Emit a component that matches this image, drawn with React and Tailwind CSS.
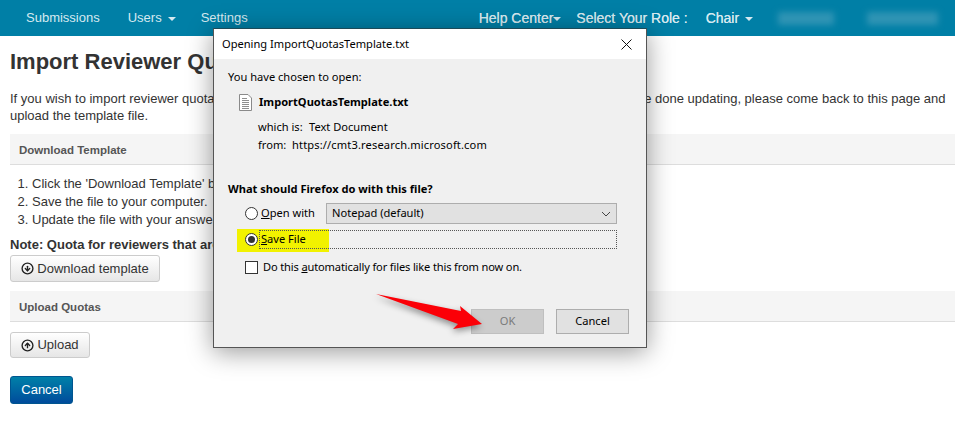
import { CircleArrowDown, CircleArrowUp } from "lucide-react";

const Caret = () => (
  <span className="inline-block ml-1.5 align-middle border-x-[4px] border-t-[4px] border-x-transparent border-t-[#d5e9f0]" />
);

const Radio = ({ checked }) => (
  <span className="w-[13px] h-[13px] rounded-full border border-[#333] bg-white flex items-center justify-center shrink-0">
    {checked && <span className="w-[7px] h-[7px] rounded-full bg-[#333]" />}
  </span>
);

const FileIcon = () => (
  <svg width="13" height="17" viewBox="0 0 13 17" className="shrink-0">
    <path d="M0.5 0.5H9L12.5 4V16.5H0.5Z" fill="#fff" stroke="#8a8a8a" />
    <path d="M3 4.5H8M3 6.5H10M3 8.5H10M3 10.5H10M3 12.5H10M3 14.5H10" stroke="#8f8f8f" />
  </svg>
);

const Dialog = () => (
  <div className="absolute left-[213px] top-[28px] w-[434px] h-[320px] flex flex-col border border-[#555] border-t-[#1c4a58] bg-[#f0f0f0] shadow-[0_4px_24px_rgba(0,0,0,0.4)] font-['Noto_Sans',sans-serif] text-[11.1px] text-black">
    {/* Title bar */}
    <div className="h-[30px] bg-white flex items-center justify-between pl-2 pr-[14px] shrink-0">
      <span>Opening ImportQuotasTemplate.txt</span>
      <svg width="11" height="11" viewBox="0 0 11 11">
        <path d="M0.5 0.5L10.5 10.5M10.5 0.5L0.5 10.5" stroke="#111" />
      </svg>
    </div>

    <div className="flex-1 flex flex-col pl-[14px] pr-[17px]">
      <div className="mt-[9px] leading-[17px]">You have chosen to open:</div>

      <div className="mt-[9px] ml-[11px] flex items-center gap-[7px] h-[17px]">
        <FileIcon />
        <span className="font-bold">ImportQuotasTemplate.txt</span>
      </div>
      <div className="mt-[8px] ml-[30px] flex h-[17px] items-center">
        <span className="w-[51px]">which is:</span>
        <span>Text Document</span>
      </div>
      <div className="ml-[30px] flex h-[19px] items-center">
        <span className="w-[34px]">from:</span>
        <span className="tracking-[0.14px]">https://cmt3.research.microsoft.com</span>
      </div>

      <div className="mt-[25px] font-bold leading-[17px]">What should Firefox do with this file?</div>

      <div className="mt-[6px] ml-[17px] mr-[12px] flex items-center h-[21px]">
        <Radio />
        <span className="ml-[2px] w-[66px] pl-[1px]"><u>O</u>pen with</span>
        <div className="flex-1 h-[21px] bg-[#e1e1e1] border border-[#adadad] flex items-center justify-between pl-[5px] pr-[5px]">
          <span>Notepad (default)</span>
          <svg width="10" height="6" viewBox="0 0 10 6">
            <path d="M1 1L5 5L9 1" fill="none" stroke="#444" />
          </svg>
        </div>
      </div>

      {/* Save File row, with the yellow marker behind it */}
      <div className="relative mt-[5px] ml-[17px] mr-[12px] flex items-center h-[20px]">
        <div className="absolute left-[-8px] top-0 w-[92px] h-[23px] bg-[#f2f200]" />
        <span className="relative"><Radio checked /></span>
        <div className="relative ml-[1px] flex-1 h-[19px] border border-dotted border-[#555] pl-[1px] flex items-center">
          <span><u>S</u>ave File</span>
        </div>
      </div>

      <div className="mt-[12px] ml-[17px] flex items-center h-[13px]">
        <span className="w-[13px] h-[13px] border border-[#333] bg-white shrink-0" />
        <span className="ml-[5px] tracking-[-0.15px]">Do this <u>a</u>utomatically for files like this from now on.</span>
      </div>

      <div className="mt-[35px] flex justify-end gap-[12px]">
        <div className="w-[73px] h-[25px] bg-[#cccccc] border border-[#bfbfbf] text-[#7a7a7a] flex items-center justify-center">OK</div>
        <div className="w-[73px] h-[25px] bg-[#e1e1e1] border border-[#adadad] flex items-center justify-center">Cancel</div>
      </div>
    </div>
  </div>
);

const Arrow = () => (
  <svg className="absolute left-[370px] top-[288px] drop-shadow-[-1px_3px_3px_rgba(0,0,0,0.4)]" width="120" height="46" viewBox="370 288 120 46">
    <path d="M376 294L461 311L460 306L482 324L453 329L458 324Z" fill="#fb0007" />
  </svg>
);

const App = () => {
  return (
    <div className="relative w-[955px] h-[422px] overflow-hidden bg-white font-['Liberation_Sans',Arial,sans-serif] text-[13px] text-[#333]">
      {/* Top nav */}
      <nav className="h-[36px] bg-[#007fa6] text-[#d5e9f0] flex items-center">
        <span className="ml-[26px]">Submissions</span>
        <span className="ml-[28px]">Users<Caret /></span>
        <span className="ml-[25px]">Settings</span>
        <span className="ml-[231px] text-[14px] [text-shadow:0_0_0.4px_#d5e9f0]">Help Center<span className="inline-block align-middle border-x-[4px] border-t-[4px] border-x-transparent border-t-[#d5e9f0]" /></span>
        <span className="ml-[15px] text-[14px] [text-shadow:0_0_0.4px_#d5e9f0]">Select Your Role :</span>
        <span className="ml-[18px] text-[14px] [text-shadow:0_0_0.4px_#d5e9f0]">Chair<Caret /></span>
        <span className="ml-[25px] w-[56px] h-[13px] bg-[#2f94b4] blur-[3px]" />
        <span className="ml-[33px] w-[71px] h-[13px] bg-[#2f94b4] blur-[3px]" />
      </nav>

      <main className="pl-[10px]">
        <h1 className="mt-[12px] text-[22px] leading-[28px] font-bold">Import Reviewer Quotas</h1>
        <p className="mt-[14px] leading-[17px]">
          If you wish to import reviewer quotas, click the 'Download Template' button and then open the file. Once you are done updating, please come back to this page and<br />upload the template file.
        </p>

        <div className="mt-[10px] h-[31px] pt-[3px] bg-[#f5f5f5] border-b border-[#dddddd] flex items-center pl-[9px] text-[11.5px] font-bold text-[#555]">
          Download Template
        </div>
        <ol className="mt-[10px] pl-[22px] list-decimal leading-[18px]">
          <li>Click the 'Download Template' button.</li>
          <li>Save the file to your computer.</li>
          <li>Update the file with your answers.</li>
        </ol>
        <div className="mt-[7px] font-bold leading-[18px]">Note: Quota for reviewers that are not in the file will not change.</div>
        <button className="mt-[1px] w-[150px] h-[27px] flex items-center justify-center gap-[3px] rounded-[3px] border border-[#cccccc] bg-gradient-to-b from-white to-[#e6e6e6]">
          <CircleArrowDown size={13} strokeWidth={2.5} color="#222" />
          Download template
        </button>

        <div className="mt-[9px] h-[31px] pt-[3px] bg-[#f5f5f5] border-b border-[#dddddd] flex items-center pl-[9px] text-[11.5px] font-bold text-[#555]">
          Upload Quotas
        </div>
        <button className="mt-[10px] w-[80px] h-[26px] flex items-center justify-center gap-[3px] rounded-[3px] border border-[#cccccc] bg-gradient-to-b from-white to-[#e6e6e6]">
          <CircleArrowUp size={13} strokeWidth={2.5} color="#222" />
          Upload
        </button>
        <button className="mt-[18px] block w-[63px] h-[28px] rounded-[3px] border border-[#00558f] bg-gradient-to-b from-[#0080a8] to-[#004b9b] text-white">
          Cancel
        </button>
      </main>

      <Dialog />
      <Arrow />
    </div>
  );
};

export default App;
